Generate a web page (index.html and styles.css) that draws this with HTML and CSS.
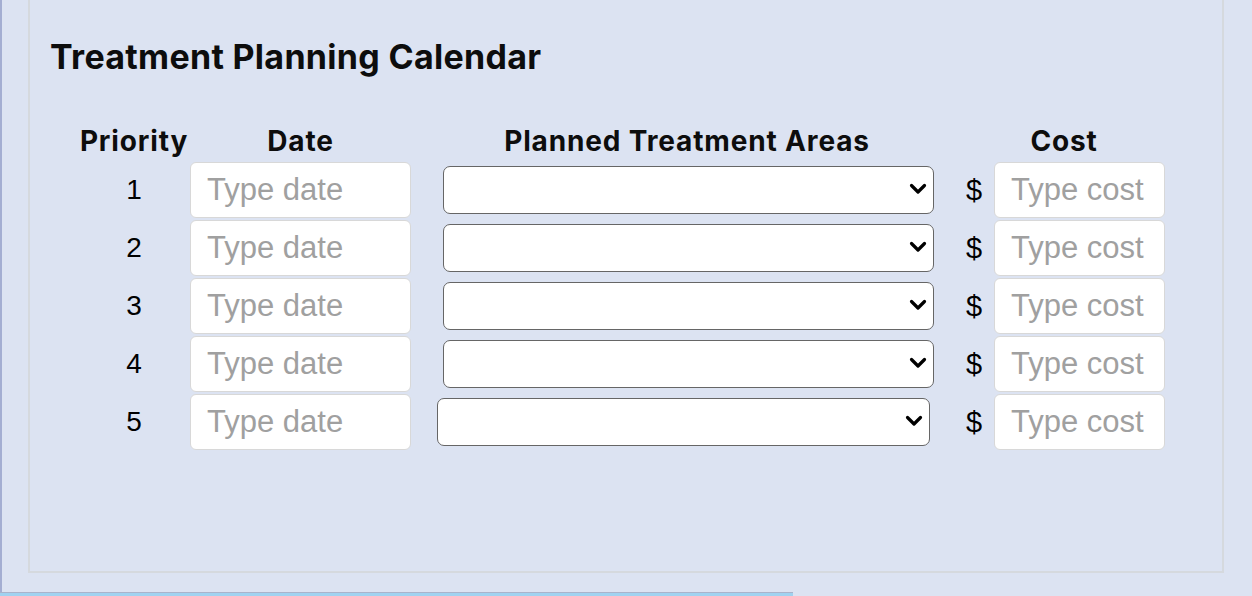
FILE: index.html
```html
<!DOCTYPE html>
<html lang="en">
<head>
<meta charset="utf-8">
<title>Treatment Planning Calendar</title>
<link rel="stylesheet" href="styles.css">
</head>
<body>
<div class="page">
  <section class="panel">
    <h2 class="title">Treatment Planning Calendar</h2>
    <div class="plan">
      <div class="head">Priority</div>
      <div class="head">Date</div>
      <div class="head">Planned Treatment Areas</div>
      <div class="head head-cost">Cost</div>

      <div class="num">1</div>
      <input class="field date" type="text" placeholder="Type date">
      <div class="sel-wrap"><select class="sel"><option></option></select><svg class="chev" width="18" height="12" viewBox="0 0 18 12"><polyline points="2.5,2.5 9,9 15.5,2.5" fill="none" stroke="#000" stroke-width="3.2" stroke-linecap="round" stroke-linejoin="round"/></svg></div>
      <div class="dollar">$</div>
      <input class="field cost" type="text" placeholder="Type cost">

      <div class="num">2</div>
      <input class="field date" type="text" placeholder="Type date">
      <div class="sel-wrap"><select class="sel"><option></option></select><svg class="chev" width="18" height="12" viewBox="0 0 18 12"><polyline points="2.5,2.5 9,9 15.5,2.5" fill="none" stroke="#000" stroke-width="3.2" stroke-linecap="round" stroke-linejoin="round"/></svg></div>
      <div class="dollar">$</div>
      <input class="field cost" type="text" placeholder="Type cost">

      <div class="num">3</div>
      <input class="field date" type="text" placeholder="Type date">
      <div class="sel-wrap"><select class="sel"><option></option></select><svg class="chev" width="18" height="12" viewBox="0 0 18 12"><polyline points="2.5,2.5 9,9 15.5,2.5" fill="none" stroke="#000" stroke-width="3.2" stroke-linecap="round" stroke-linejoin="round"/></svg></div>
      <div class="dollar">$</div>
      <input class="field cost" type="text" placeholder="Type cost">

      <div class="num">4</div>
      <input class="field date" type="text" placeholder="Type date">
      <div class="sel-wrap"><select class="sel"><option></option></select><svg class="chev" width="18" height="12" viewBox="0 0 18 12"><polyline points="2.5,2.5 9,9 15.5,2.5" fill="none" stroke="#000" stroke-width="3.2" stroke-linecap="round" stroke-linejoin="round"/></svg></div>
      <div class="dollar">$</div>
      <input class="field cost" type="text" placeholder="Type cost">

      <div class="num">5</div>
      <input class="field date" type="text" placeholder="Type date">
      <div class="sel-wrap sel-wrap-shift"><select class="sel"><option></option></select><svg class="chev" width="18" height="12" viewBox="0 0 18 12"><polyline points="2.5,2.5 9,9 15.5,2.5" fill="none" stroke="#000" stroke-width="3.2" stroke-linecap="round" stroke-linejoin="round"/></svg></div>
      <div class="dollar">$</div>
      <input class="field cost" type="text" placeholder="Type cost">
    </div>
  </section>
</div>
<div class="bottombar"></div>
</body>
</html>
```

FILE: styles.css
```css
html, body {
  margin: 0;
  padding: 0;
}
body {
  background: #dce3f2;
  width: 1252px;
  height: 596px;
  overflow: hidden;
}
.page {
  height: 592px;
  border-left: 2px solid #a4aed2;
  box-sizing: border-box;
}
.panel {
  margin-left: 26px;
  width: 1196px;
  height: 573px;
  box-sizing: border-box;
  border: 2px solid #d5d9de;
  border-top: none;
  padding: 37px 0 0 20px;
}
.title {
  margin: 0;
  font-family: Inter, Lato, "Liberation Sans", sans-serif;
  font-weight: 700;
  font-size: 34px;
  line-height: 40px;
  letter-spacing: 0.3px;
  color: #0d0d0d;
}
.plan {
  margin-top: 45px;
  margin-left: 28px;
  display: grid;
  grid-template-columns: 112px 221px 552px 31px 171px;
  grid-template-rows: 38px;
  grid-auto-rows: 56px;
  row-gap: 2px;
  align-items: center;
}
.plan .head {
  font-family: Inter, Lato, "Liberation Sans", sans-serif;
  font-weight: 700;
  font-size: 28px;
  line-height: 32px;
  letter-spacing: 0.85px;
  text-align: center;
  color: #0d0d0d;
  align-self: start;
  margin-top: 3px;
}
.plan .head-cost {
  grid-column: 4 / 6;
}
.num {
  font-family: "Liberation Sans", Arial, sans-serif;
  font-size: 28px;
  text-align: center;
  color: #000;
}
.field {
  box-sizing: border-box;
  height: 56px;
  width: 100%;
  margin: 0;
  border: 1px solid #d8d8d8;
  border-radius: 6px;
  background: #fff;
  padding: 0 0 0 16px;
  font-family: "Liberation Sans", Arial, sans-serif;
  font-size: 31px;
  color: #222;
  outline: none;
}
.field::placeholder {
  color: #a0a0a0;
}
.sel-wrap {
  position: relative;
  margin-left: 32px;
  width: 491px;
  height: 48px;
}
.sel-wrap-shift {
  margin-left: 26px;
  width: 493px;
}
.sel {
  appearance: none;
  -webkit-appearance: none;
  box-sizing: border-box;
  width: 100%;
  height: 48px;
  margin: 0;
  border: 1.5px solid #666;
  border-radius: 7px;
  background: #fff;
  font-family: "Liberation Sans", Arial, sans-serif;
  font-size: 20px;
}
.chev {
  position: absolute;
  right: 7px;
  top: 17px;
  pointer-events: none;
}
.dollar {
  font-family: "Liberation Sans", Arial, sans-serif;
  font-size: 29px;
  color: #000;
  padding-left: 3px;
}
.bottombar {
  width: 793px;
  height: 4px;
  box-sizing: border-box;
  border-top: 1.5px solid #a9b3cb;
  background: #a0d2f0;
}
```
